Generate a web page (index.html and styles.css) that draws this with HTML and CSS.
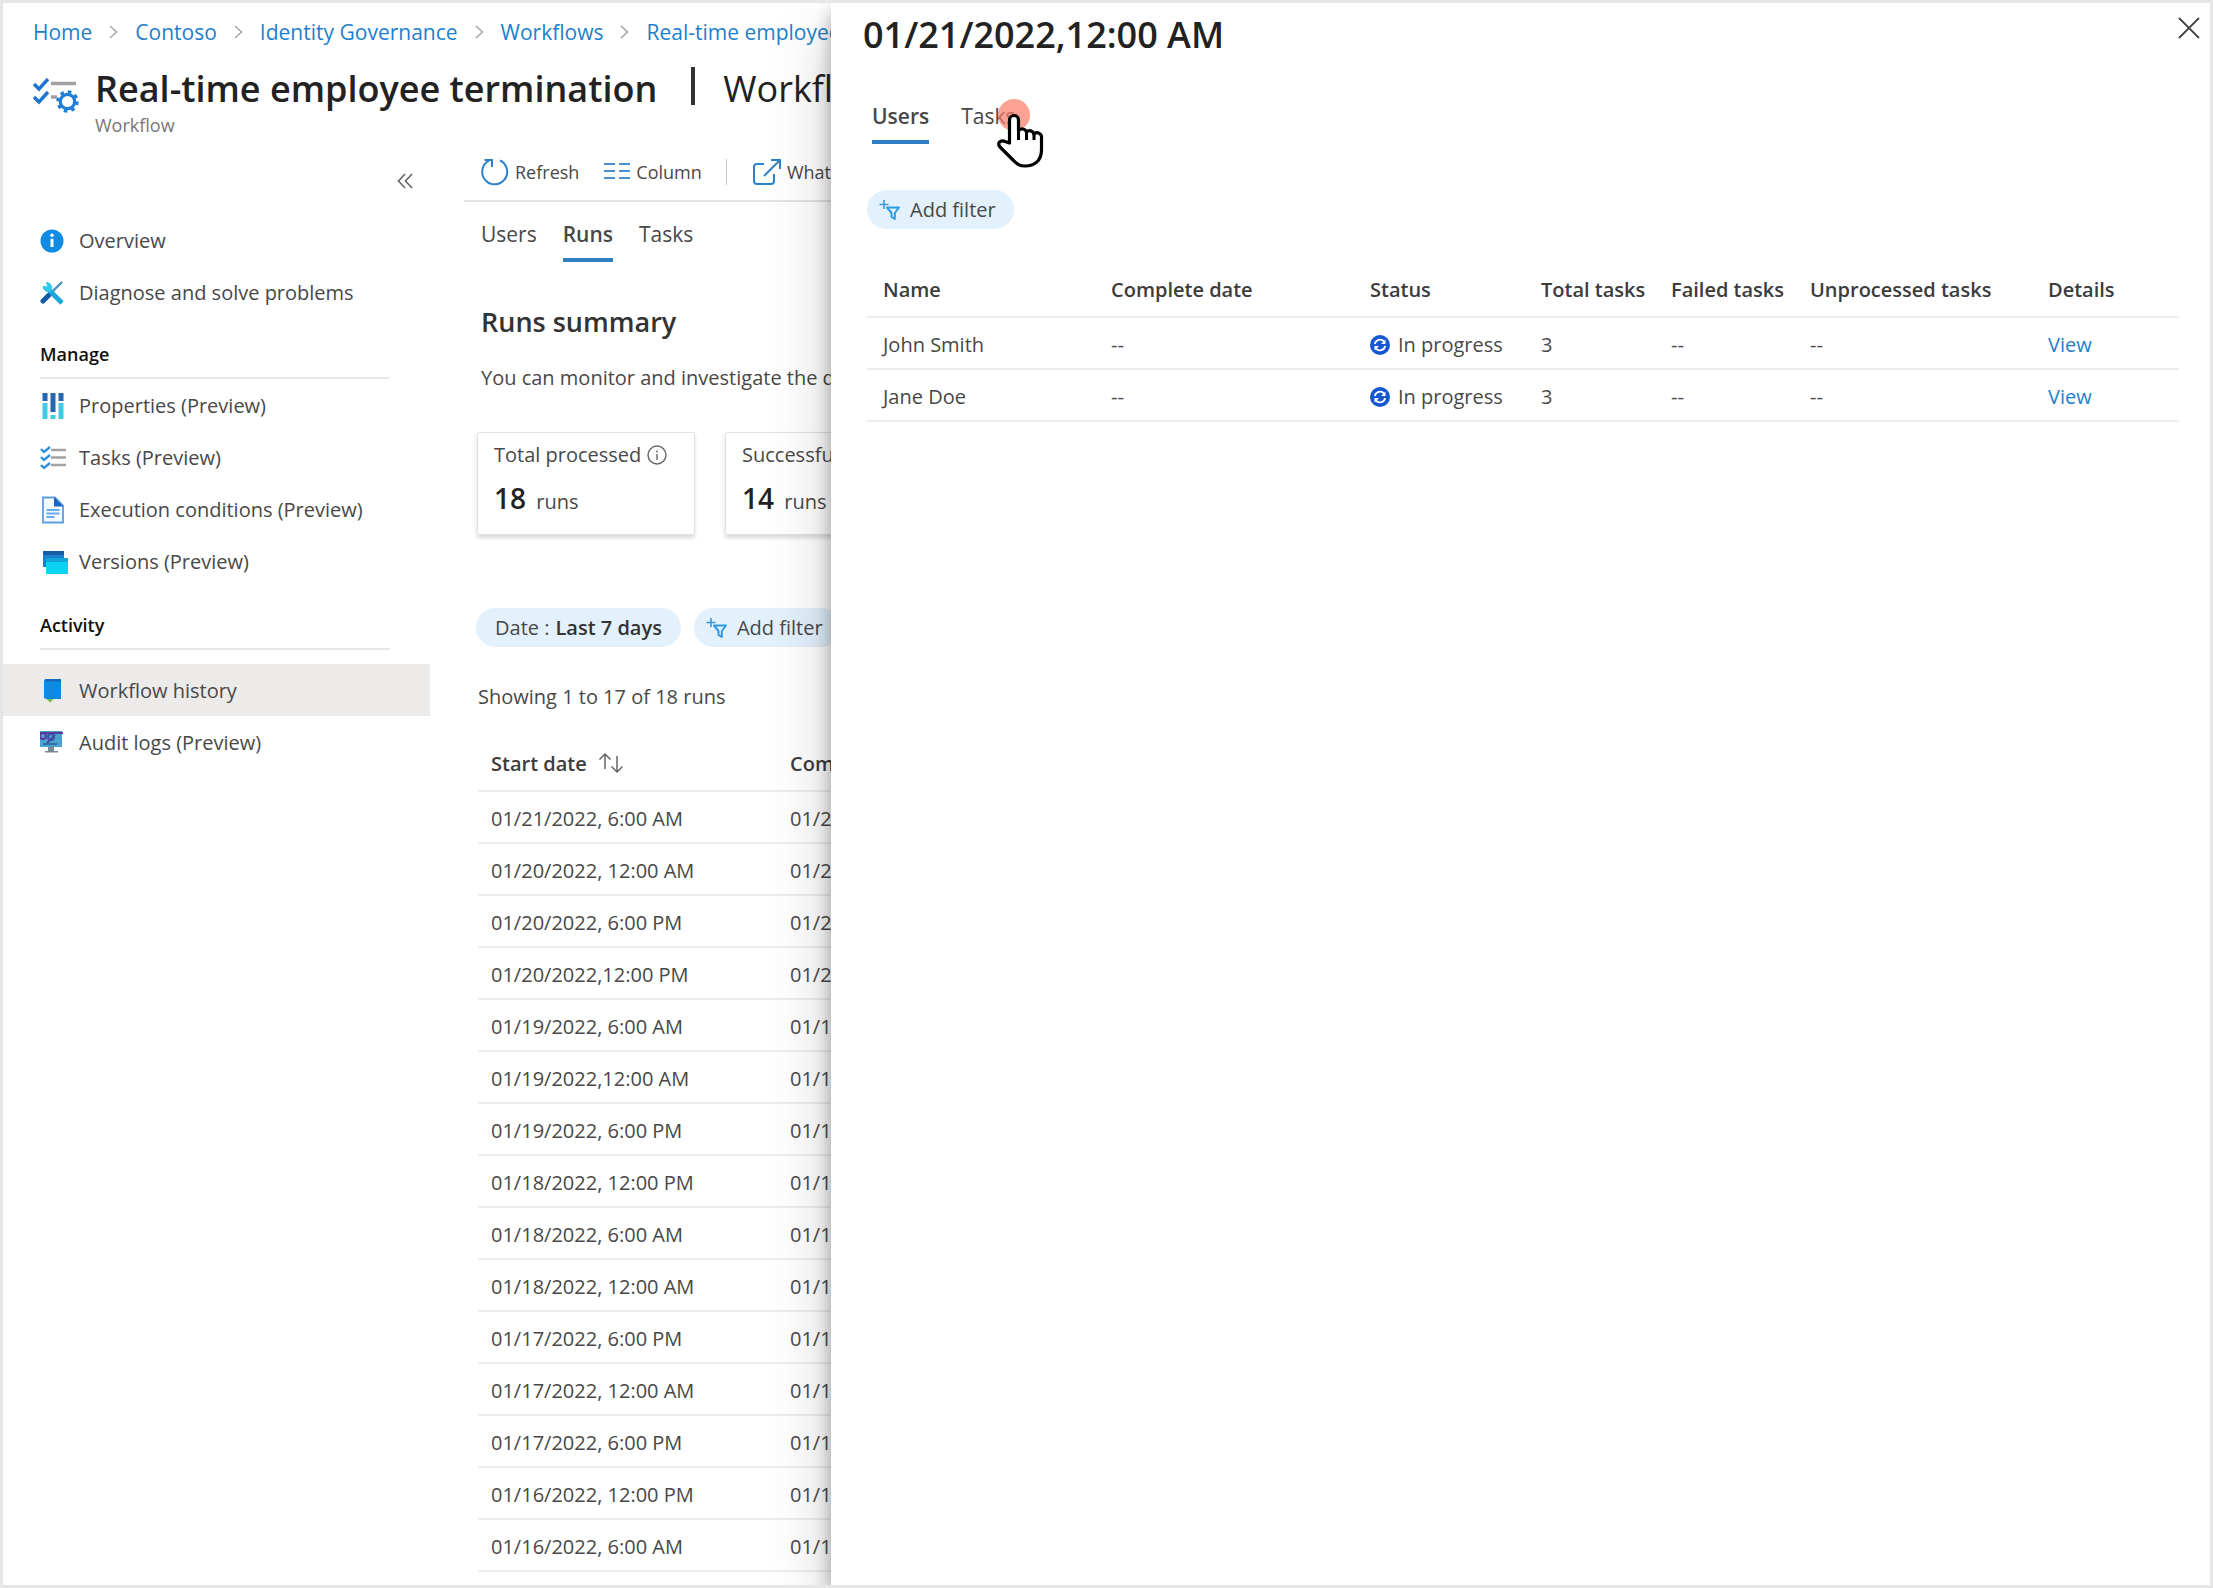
FILE: index.html
```
<!DOCTYPE html>
<html lang="en">
<head>
<meta charset="utf-8">
<title>Workflow history</title>
<link rel="stylesheet" href="styles.css">
</head>
<body>
<svg class="sprite" aria-hidden="true">
  <symbol id="add-filter" viewBox="0 0 22 22">
    <path d="M5 1v9M.5 5.500h9" stroke="#3a96dd" stroke-width="1.600" fill="none"/>
    <path d="M8 8.500h12l-4.200 5.500v6l-3.300-2.200V14z" stroke="#2f9be6" stroke-width="2" fill="none" stroke-linejoin="round"/>
  </symbol>
  <symbol id="in-progress" viewBox="0 0 20 20">
    <circle cx="10" cy="10" r="10" fill="#1457d0"/>
    <path d="M4.800 9a5.400 5.400 0 0 1 9.400-2.400M15.200 11a5.400 5.400 0 0 1-9.400 2.400" stroke="#fff" stroke-width="1.800" fill="none"/>
    <path d="M15.500 4.500v4.500h-4.500zM4.500 15.500v-4.500h4.500z" fill="#fff"/>
  </symbol>
  <symbol id="chevron" viewBox="0 0 9 14">
    <path d="M1 1l6.500 6L1 13" stroke="#a5a5a5" stroke-width="1.500" fill="none"/>
  </symbol>
</svg>
<div class="frame">
  <div class="page">
    <header class="page-header">
      <nav class="breadcrumb" aria-label="Breadcrumb">
        <a href="#">Home</a><svg class="chevron"><use href="#chevron"/></svg>
        <a href="#">Contoso</a><svg class="chevron"><use href="#chevron"/></svg>
        <a href="#">Identity Governance</a><svg class="chevron"><use href="#chevron"/></svg>
        <a href="#">Workflows</a><svg class="chevron"><use href="#chevron"/></svg>
        <a class="crumb-last" href="#">Real-time employee</a>
      </nav>
      <div class="heading">
        <svg class="heading-icon" viewBox="0 0 46 36" fill="none">
          <path d="M1 6l5 5L15 1M1 19l5 5 9-10" stroke="#1f74d0" stroke-width="3.400"/>
          <path d="M18 5.500h25M18 19h6" stroke="#a0a0a0" stroke-width="3.600"/>
          <circle cx="34.500" cy="23.500" r="7.200" stroke="#1f7fd8" stroke-width="3.200"/>
          <circle cx="34.500" cy="23.500" r="9.700" stroke="#1f7fd8" stroke-width="3" stroke-dasharray="3.600 4.018"/>
        </svg>
        <div class="heading-text">
          <h1 class="title"><span>Real-time employee termination</span><span class="title-bar"></span><span class="title-page">Workflow</span></h1>
          <p class="subtitle">Workflow</p>
        </div>
      </div>
    </header>
    <div class="body">
      <nav class="sidebar" aria-label="Workflow">
        <button class="collapse" type="button" aria-label="Collapse menu">
          <svg width="16" height="16" viewBox="0 0 16 16" fill="none" stroke="#666" stroke-width="1.600"><path d="M8 1L1.500 8 8 15M15 1L8.500 8l6.500 7"/></svg>
        </button>
        <a class="nav-item" href="#"><svg class="nav-icon" viewBox="0 0 28 28"><circle cx="12" cy="14" r="11.500" fill="#0f8be4"/><circle cx="12" cy="8.300" r="1.800" fill="#fff"/><path d="M12 11.800v8.200" stroke="#fff" stroke-width="3" fill="none"/></svg>Overview</a>
        <a class="nav-item" href="#"><svg class="nav-icon" viewBox="0 0 28 28"><path d="M22 3L10 15" stroke="#4a8fb8" stroke-width="2.400"/><path d="M11 14l-8 8" stroke="#115aa8" stroke-width="5" stroke-linecap="round"/><path d="M7 9l15 15" stroke="#1ba6dc" stroke-width="4.600"/><path d="M6.500 3.500L8 8 3 7.500A5.500 5.500 0 0 0 11 12 5.500 5.500 0 0 0 6.500 3.500z" fill="#32c8ea" stroke="#32c8ea"/></svg>Diagnose and solve problems</a>
        <h2 class="nav-group">Manage</h2>
        <a class="nav-item" href="#"><svg class="nav-icon" viewBox="0 0 28 28" fill="none" stroke-width="5"><path d="M5 1v8M21 1v8M13 1v19" stroke="#2467ae"/><path d="M5 11v16M21 11v16M13 23v4" stroke="#42c9e2"/></svg>Properties (Preview)</a>
        <a class="nav-item" href="#"><svg class="nav-icon" viewBox="0 0 28 28" fill="none"><path d="M1 5l3 3 6-5M1 13l3 3 6-5M1 21l3 3 6-5" stroke="#2b8fe0" stroke-width="2.400"/><path d="M11 6h15M11 13.500h15M11 21h15" stroke="#a3a3a3" stroke-width="2.400"/></svg>Tasks (Preview)</a>
        <a class="nav-item" href="#"><svg class="nav-icon" viewBox="0 0 28 28"><path d="M3 1.500h12l8 8v17H3z" fill="#f5faff" stroke="#5a9fe0" stroke-width="1.800"/><path d="M14 1l9.500 9.500H14z" fill="#1766c0"/><path d="M6.500 14h13M6.500 17.500h13M6.500 21h8" stroke="#6aaaf2" stroke-width="1.800"/></svg>Execution conditions (Preview)</a>
        <a class="nav-item" href="#"><svg class="nav-icon" viewBox="0 0 28 28"><path d="M3 3h21v16H3z" fill="#1780cf"/><path d="M3 3h21v4H3z" fill="#165da8"/><path d="M6 11h22v15H6z" fill="#0bd4f2"/><path d="M6 10h22v4H6z" fill="#13a5d8"/></svg>Versions (Preview)</a>
        <h2 class="nav-group nav-group-wide">Activity</h2>
        <a class="nav-item nav-item-current" href="#" aria-current="page"><svg class="nav-icon" viewBox="0 0 28 28"><path d="M7 20h9l-4 3.500-2 2-3-3z" fill="#6cc14a"/><path d="M6 2h15v20H6a2 2 0 0 1-2-2V4a2 2 0 0 1 2-2z" fill="#0f8ae0"/><path d="M6 2h15v2.500H4.500z" fill="#1769bd"/></svg>Workflow history</a>
        <a class="nav-item" href="#"><svg class="nav-icon" viewBox="1 0 28 28"><path d="M1 2h22v16H1z" fill="#4aa3cf"/><path d="M9 18h6v4H9zM6 22h13v1.600H6z" fill="#7b8794"/><path d="M0 4h24M8 14l8-8" stroke="#5a3a9c" stroke-width="1.800"/><circle cx="4" cy="7" r="3" fill="none" stroke="#5a3a9c" stroke-width="2"/><circle cx="12" cy="8" r="3" fill="none" stroke="#3d4fa8" stroke-width="2"/><path d="M4 15h14" stroke="#245f95" stroke-width="1.500"/></svg>Audit logs (Preview)</a>
      </nav>
      <main class="main">
        <div class="toolbar">
          <button class="tool" type="button"><svg width="30" height="30" viewBox="0 0 30 30" fill="none" stroke="#2c83cc" stroke-width="2"><path d="M20 3.500A12.500 12.500 0 1 1 9 3.700"/><path d="M4.500 3H12v7"/></svg>Refresh</button>
          <button class="tool tool-column" type="button"><svg width="28" height="20" viewBox="0 0 28 20" fill="none" stroke="#4a90cc" stroke-width="2"><path d="M1 2h11M16 2h11M1 9h11M16 9h11M1 16h11M16 16h11"/></svg>Column</button>
          <span class="tool-divider"></span>
          <button class="tool" type="button"><svg width="30" height="28" viewBox="0 0 30 28" fill="none" stroke="#2c83cc" stroke-width="2"><path d="M12 6H5a3 3 0 0 0-3 3v14a3 3 0 0 0 3 3h14a3 3 0 0 0 3-3v-7M12 18L28 2M19 2h9v9"/></svg>What</button>
        </div>
        <div class="content">
          <div class="tabs" role="tablist">
            <button class="tab" type="button" role="tab">Users</button>
            <button class="tab tab-active" type="button" role="tab" aria-selected="true">Runs</button>
            <button class="tab" type="button" role="tab">Tasks</button>
          </div>
          <h2 class="section-title">Runs summary</h2>
          <p class="description">You can monitor and investigate the details</p>
          <div class="cards">
            <div class="card">
              <p class="card-label">Total processed <svg width="20" height="20" viewBox="0 0 20 20" fill="none" stroke="#666" stroke-width="1.400"><circle cx="10" cy="10" r="9"/><path d="M10 9v6M10 5.500v2"/></svg></p>
              <p class="card-value"><strong>18</strong> runs</p>
            </div>
            <div class="card">
              <p class="card-label">Successful</p>
              <p class="card-value"><strong>14</strong> runs</p>
            </div>
          </div>
          <div class="filters">
            <button class="pill pill-date" type="button">Date : <strong>Last 7 days</strong></button>
            <button class="pill" type="button"><svg width="22" height="22"><use href="#add-filter"/></svg>Add filter</button>
          </div>
          <p class="showing">Showing 1 to 17 of 18 runs</p>
          <table class="table runs">
            <thead><tr><th>Start date <svg class="sort" width="26" height="22" viewBox="0 0 26 22" fill="none" stroke="#666" stroke-width="1.500"><path d="M7 17V2M1.500 7.500L7 2l5.500 5.500M19 4v16M13.500 14.500L19 20l5.500-5.500"/></svg></th><th>Completed</th></tr></thead>
            <tbody>
              <tr><td>01/21/2022, 6:00 AM</td><td>01/21/2022</td></tr>
              <tr><td>01/20/2022, 12:00 AM</td><td>01/20/2022</td></tr>
              <tr><td>01/20/2022, 6:00 PM</td><td>01/20/2022</td></tr>
              <tr><td>01/20/2022,12:00 PM</td><td>01/20/2022</td></tr>
              <tr><td>01/19/2022, 6:00 AM</td><td>01/19/2022</td></tr>
              <tr><td>01/19/2022,12:00 AM</td><td>01/19/2022</td></tr>
              <tr><td>01/19/2022, 6:00 PM</td><td>01/19/2022</td></tr>
              <tr><td>01/18/2022, 12:00 PM</td><td>01/18/2022</td></tr>
              <tr><td>01/18/2022, 6:00 AM</td><td>01/18/2022</td></tr>
              <tr><td>01/18/2022, 12:00 AM</td><td>01/18/2022</td></tr>
              <tr><td>01/17/2022, 6:00 PM</td><td>01/17/2022</td></tr>
              <tr><td>01/17/2022, 12:00 AM</td><td>01/17/2022</td></tr>
              <tr><td>01/17/2022, 6:00 PM</td><td>01/17/2022</td></tr>
              <tr><td>01/16/2022, 12:00 PM</td><td>01/16/2022</td></tr>
              <tr><td>01/16/2022, 6:00 AM</td><td>01/16/2022</td></tr>
            </tbody>
          </table>
        </div>
      </main>
    </div>
  </div>

  <section class="panel" role="dialog" aria-labelledby="panel-title">
    <header class="panel-header">
      <h2 class="panel-title" id="panel-title">01/21/2022,12:00 AM</h2>
      <button class="close" type="button" aria-label="Close"><svg width="22" height="22" viewBox="0 0 22 22" fill="none" stroke="#444" stroke-width="1.800"><path d="M1 1l20 20M21 1L1 21"/></svg></button>
    </header>
    <div class="tabs panel-tabs" role="tablist">
      <button class="tab tab-active" type="button" role="tab" aria-selected="true">Users</button>
      <button class="tab tab-pointed" type="button" role="tab">Tasks
        <svg class="pointer" width="50" height="74" viewBox="0 0 50 74"><circle cx="20" cy="17" r="16" fill="#fb7a64" fill-opacity=".7"/><path d="M15.500 45V22a4.500 4.500 0 0 1 9 0v11a4.500 4.500 0 0 1 8 1 4.500 4.500 0 0 1 7.500 2 4.500 4.500 0 0 1 7.500 4v12C47.500 63 40 68 31.500 68c-7 0-9.500-3-13-6.500L6 49c-3.500-4.500 1.500-7.500 5-5.500z" fill="#fff" stroke="#000" stroke-width="3.200" stroke-linejoin="round"/><path d="M24.500 32v10M32.500 34v8M40 36v6" stroke="#000" stroke-width="3"/></svg>
      </button>
    </div>
    <button class="pill panel-filter" type="button"><svg width="22" height="22"><use href="#add-filter"/></svg>Add filter</button>
    <table class="table users">
      <colgroup><col class="c-name"><col class="c-date"><col class="c-status"><col class="c-total"><col class="c-failed"><col class="c-unprocessed"><col></colgroup>
      <thead><tr><th>Name</th><th>Complete date</th><th>Status</th><th>Total tasks</th><th>Failed tasks</th><th>Unprocessed tasks</th><th>Details</th></tr></thead>
      <tbody>
        <tr><td>John Smith</td><td>--</td><td><span class="status"><svg width="20" height="20"><use href="#in-progress"/></svg>In progress</span></td><td>3</td><td>--</td><td>--</td><td><a href="#">View</a></td></tr>
        <tr><td>Jane Doe</td><td>--</td><td><span class="status"><svg width="20" height="20"><use href="#in-progress"/></svg>In progress</span></td><td>3</td><td>--</td><td>--</td><td><a href="#">View</a></td></tr>
      </tbody>
    </table>
  </section>
</div>
</body>
</html>
```
FILE: styles.css
```
* { box-sizing: border-box; }
body, h1, h2, p { margin: 0; }
body {
  font: 20px/28px "Open Sans", "Noto Sans", sans-serif;
  color: #484848;
  background: #fff;
}
button {
  font: inherit;
  color: inherit;
  background: none;
  border: 0;
  padding: 0;
  white-space: nowrap;
}
a { color: #1d7fcc; text-decoration: none; }
svg { flex: none; }
.sprite { position: absolute; width: 0; height: 0; }

.frame {
  display: grid;
  grid-template-columns: 828px 1fr;
  min-height: 100vh;
  overflow: hidden;
  border: 3px solid #e6e6e6;
}

.page { min-width: 0; padding-bottom: 12px; overflow: hidden; white-space: nowrap; }
.page-header { padding: 15px 0 0 30px; }
.breadcrumb { display: flex; align-items: center; gap: 17px; font-size: 21px; }
.crumb-last { flex: 1; min-width: 0; overflow: hidden; }
.chevron { width: 9px; height: 14px; }
.heading { display: flex; gap: 16px; padding-top: 20px; }
.heading-text { flex: 1; min-width: 0; }
.heading-icon { width: 46px; height: 36px; margin-top: 12px; }
.title {
  display: flex;
  align-items: center;
  font-size: 36px;
  line-height: 46px;
  font-weight: 600;
  color: #222;
}
.title-bar { width: 4px; height: 38px; margin: 0 28px 6px 34px; background: #333; }
.title-page { flex: 1; min-width: 0; overflow: hidden; font-weight: 400; }
.subtitle { font-size: 18px; line-height: 26px; color: #777; }

.body { display: grid; grid-template-columns: 427px 1fr; gap: 34px; }

.sidebar { display: flex; flex-direction: column; }
.collapse { align-self: flex-end; display: flex; margin: 35px 17px 25px 0; }
.nav-item {
  display: flex;
  align-items: center;
  gap: 11px;
  height: 52px;
  padding: 2px 0 0 37px;
  color: #484848;
}
.nav-icon { width: 28px; height: 28px; }
.nav-item-current { background: #edebe9; }
.nav-group {
  margin: 22px 40px 0 37px;
  padding-bottom: 9px;
  font-size: 18px;
  font-weight: 600;
  color: #111;
  border-bottom: 2px solid #e8e8e8;
}
.nav-group-wide { margin: 24px 40px 14px 37px; }

.main { min-width: 0; overflow: hidden; }
.toolbar {
  display: flex;
  align-items: center;
  height: 64px;
  padding: 6px 0 0 16px;
  font-size: 18px;
  border-bottom: 2px solid #e2e2e2;
}
.tool { display: flex; align-items: center; gap: 5px; }
.tool-column { margin-left: 24px; }
.tool-divider { width: 2px; height: 26px; margin: 0 26px 0 24px; background: #c8c8c8; }

.content { padding-left: 12px; }
.tabs { display: flex; gap: 26px; padding: 18px 0 0 5px; font-size: 21px; }
.tab { padding-bottom: 10px; border-bottom: 4px solid transparent; }
.tab-active { font-weight: 600; border-color: #2e7fc4; }
.section-title {
  padding: 42px 0 0 5px;
  font-size: 27px;
  line-height: 36px;
  font-weight: 600;
  color: #333;
}
.description { padding: 24px 0 0 5px; overflow: hidden; }
.cards { display: flex; gap: 30px; padding: 40px 0 0 1px; }
.card {
  flex: none;
  width: 218px;
  height: 103px;
  padding: 8px 16px;
  border: 1px solid #e2e2e2;
  border-radius: 2px;
  box-shadow: 0 3px 4px rgba(0, 0, 0, .15);
}
.card-label { display: flex; align-items: center; gap: 6px; }
.card-value { padding-top: 10px; }
.card-value strong { margin-right: 5px; font-size: 28px; line-height: 38px; font-weight: 600; color: #222; }

.filters { display: flex; gap: 13px; padding-top: 73px; }
.pill {
  display: flex;
  flex: none;
  align-items: center;
  gap: 9px;
  height: 39px;
  padding: 0 18px 0 12px;
  border-radius: 20px;
  background: #e3f1fc;
}
.pill strong { font-weight: 600; color: #333; }
.pill-date { gap: 6px; padding: 0 19px; }
.showing { padding: 36px 0 26px 2px; }

.table { border-collapse: collapse; table-layout: fixed; text-align: left; }
.table th, .table td {
  height: 52px;
  padding: 3px 0 0 16px;
  border-bottom: 2px solid #ededed;
  white-space: nowrap;
}
.table th { height: 54px; padding-top: 0; font-weight: 600; color: #3c3c3c; }
.table.runs { width: calc(100% - 2px); margin-left: 2px; }
.table.runs th, .table.runs td { padding-left: 13px; overflow: hidden; }
.runs th:first-child { width: 299px; }
.sort { margin-left: 6px; vertical-align: -3px; }

.panel {
  position: relative;
  min-width: 0;
  padding-left: 36px;
  background: #fff;
  box-shadow: 0 30px 60px rgba(0, 0, 0, .2), 0 10px 16px rgba(0, 0, 0, .3);
}
.panel-header { display: flex; justify-content: space-between; padding: 9px 10px 0 0; }
.panel-title {
  margin-left: -4px;
  font-size: 36px;
  line-height: 46px;
  font-weight: 600;
  color: #222;
}
.close { display: flex; align-self: flex-start; margin-top: 5px; }
.panel-tabs { gap: 32px; padding-top: 44px; }
.tab-pointed { position: relative; }
.pointer { position: absolute; left: 33px; top: -4px; }
.panel-filter { margin-top: 46px; }
.table.users { width: calc(100% - 31px); margin-top: 34px; }
.status { display: flex; align-items: center; gap: 8px; }
.c-name { width: 228px; }
.c-date { width: 259px; }
.c-status { width: 171px; }
.c-total { width: 130px; }
.c-failed { width: 139px; }
.c-unprocessed { width: 238px; }
```
